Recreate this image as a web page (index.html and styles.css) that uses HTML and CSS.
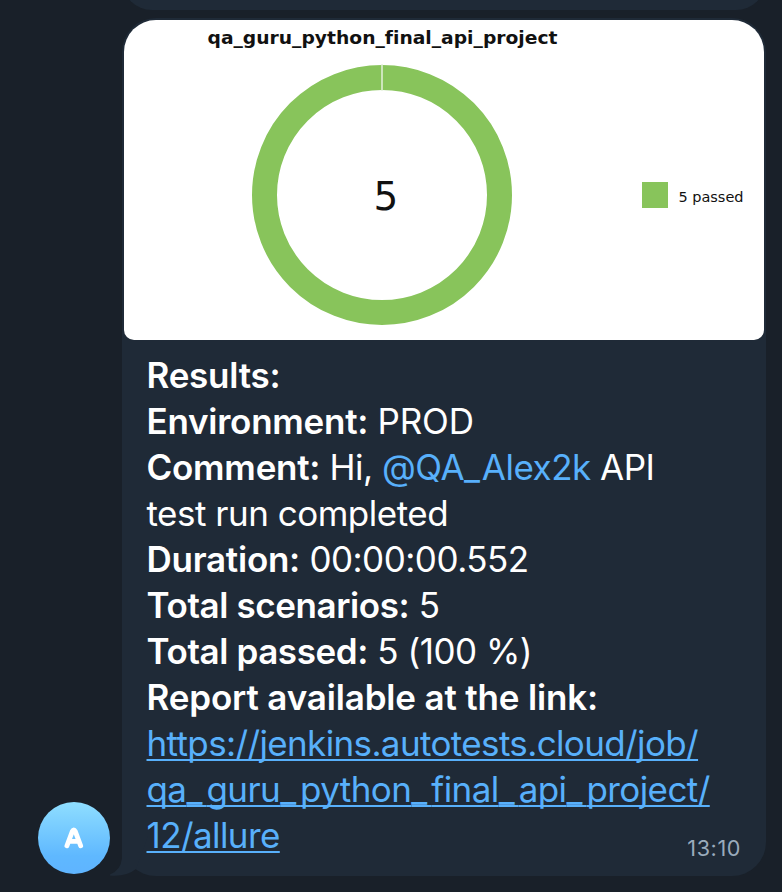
FILE: index.html
```html
<!DOCTYPE html>
<html lang="en">
<head>
<meta charset="utf-8">
<title>Test report</title>
<link rel="stylesheet" href="styles.css">
</head>
<body>
<main class="chat">
  <div class="previous"></div>
  <div class="row">
    <div class="avatar"><svg width="72" height="72" viewBox="0 0 72 72"><path d="M28.9 43.8 34.3 29.4Q35.8 26.4 37.3 29.4L42.7 43.8M31.5 39.4H40.5" fill="none" stroke="#fff" stroke-width="4.8" stroke-linecap="round" stroke-linejoin="round"/></svg></div>
    <article class="bubble">
      <svg class="tail" width="40" height="40" viewBox="0 0 40 40"><path d="M14 0V22Q13 34 2 38.5V39.5Q18 41 28 33L40 0Z" fill="#1f2a37"/></svg>
      <div class="chart">
        <svg width="640" height="320" viewBox="0 0 640 320">
          <circle cx="258" cy="175" r="117.5" fill="none" stroke="#88c45b" stroke-width="25"/>
          <path d="M258 44V71" stroke="#e4f1dc" stroke-width="1.5"/>
          <rect x="518" y="162" width="26" height="26" fill="#88c45b"/>
          <text class="title" x="83.5" y="23.5" textLength="350" lengthAdjust="spacingAndGlyphs">qa_guru_python_final_api_project</text>
          <text class="total" x="249.5" y="190">5</text>
          <text class="legend" x="554.5" y="182" textLength="65">5 passed</text>
        </svg>
      </div>
      <div class="message">
        <p><b>Results:</b></p>
        <p><b>Environment:</b> <span class="wide">PROD</span></p>
        <p><b>Comment:</b> Hi, <span class="mention">@QA<i>_</i>Alex2k</span> API</p>
        <p>test run completed</p>
        <p><b>Duration:</b> 00:00:00.552</p>
        <p><b class="tight">Total scenarios:</b> 5</p>
        <p><b class="tight">Total passed:</b> 5 (100 %)</p>
        <p><b class="wide">Report available at the link:</b></p>
        <a><span class="host">https://jenkins.autotests.cloud/job/</span><br>qa<i>_</i>guru<i>_</i>python<i>_</i>final<i>_</i>api<i>_</i>project/<br>12/allure</a>
      </div>
      <time>13:10</time>
    </article>
  </div>
</main>
</body>
</html>
```
FILE: styles.css
```css
* { box-sizing: border-box; }
body { margin: 0; background: #192029; font-family: Inter, sans-serif; color: #fff; }
.chat { height: 892px; overflow: hidden; }
.previous { width: 644px; height: 60px; margin: -50px 0 0 122px; border-radius: 34px; background: #1f2a37; }
.row { display: flex; align-items: flex-end; margin-top: 8px; padding-left: 38px; gap: 12px; }
.avatar { width: 72px; height: 72px; margin-bottom: 2px; border-radius: 50%; background: linear-gradient(#8fdeff, #5fb8ff 75%, #5fb4ff); }
.avatar svg { display: block; }
.bubble { position: relative; width: 644px; height: 858px; padding: 2px; border-radius: 34px; background: #1f2a37; }
.tail { position: absolute; left: -14px; bottom: 0; }
.chart { height: 320px; border-radius: 32px 32px 10px 10px; background: #fff; overflow: hidden; }
.chart svg { display: block; }
.chart text { font-family: "DejaVu Sans", sans-serif; font-variant-ligatures: none; fill: #111; }
.chart .title { font-size: 18px; font-weight: 700; }
.chart .total { font-size: 39px; }
.chart .legend { font-size: 14.5px; }
.message { padding: 12px 22.5px; font-size: 35px; line-height: 46px; letter-spacing: -.5px; white-space: nowrap; }
.message p { margin: 0; }
.message b { font-weight: 600; letter-spacing: -.25px; }
.message .tight { letter-spacing: -.4px; }
.message .wide { letter-spacing: -.16px; }
.message i { font-style: normal; letter-spacing: 4px; }
.message .mention i { letter-spacing: 1.8px; }
.mention, .message a { color: #58b0fb; }
.message a { letter-spacing: -.58px; text-decoration: underline; text-decoration-thickness: 2px; text-decoration-skip-ink: none; text-underline-offset: 3px; }
.host { letter-spacing: -.63px; }
time { position: absolute; right: 25px; bottom: 14px; font-size: 21.6px; line-height: 28px; letter-spacing: .6px; color: #9aabbc; }
```
